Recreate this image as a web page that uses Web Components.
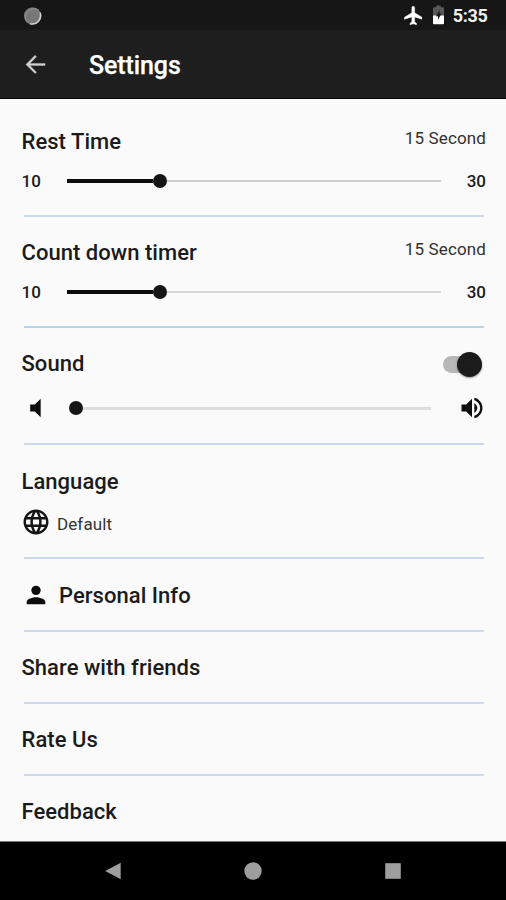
<!DOCTYPE html>
<html lang="en">
<head>
<meta charset="utf-8">
<title>Settings</title>
<style>
html,body{margin:0;height:100%;background:#fafafa}
body{font-family:Roboto,"Noto Sans",sans-serif;color:#1b1b1b;overflow:hidden}
</style>
</head>
<body>
<settings-screen></settings-screen>
<script>
const define = (name, html, setup) => customElements.define(name, class extends HTMLElement {
  connectedCallback() {
    if (this.shadowRoot) return;
    const t = document.createElement('template');
    t.innerHTML = html;
    this.attachShadow({mode: 'open'}).append(t.content.cloneNode(true));
    if (setup) setup(this);
  }
});

define('status-bar', `
<style>
:host{display:flex;align-items:center;height:30px;background:#161616;color:#f2f2f2;padding:0 18.500px 0 23px;box-sizing:border-box}
.dot{width:19px;height:19px}
.right{margin-left:auto;display:flex;align-items:center}
.plane{width:18.500px;height:19px;margin-right:9.500px}
.bat{width:13px;height:20px;margin-right:8px}
span{font-size:18px;font-weight:700;line-height:30px;padding-top:2px;letter-spacing:-.3px}
</style>
<svg class="dot" viewBox="0 0 19 19"><circle cx="9.5" cy="9.8" r="8.6" fill="#777"/><path d="M4.500 16.800A8.600 8.600 0 0 1 16 4.200" fill="none" stroke="#939393" stroke-width="1"/><path d="M17 6.500a8.400 8.400 0 0 1-10 11.200" fill="none" stroke="#cfcfcf" stroke-width="1.600"/></svg>
<div class="right">
<svg class="plane" viewBox="1.500 1.700 20 20.600"><path fill="#fff" stroke="#fff" stroke-width=".5" d="M21 16v-2l-8-5V3.500c0-.83-.67-1.500-1.500-1.500S10 2.670 10 3.500V9l-8 5v2l8-2.500V19l-2 1.500V22l3.500-1 3.500 1v-1.500L13 19v-5.500l8 2.500z"/></svg>
<svg class="bat" viewBox="0 0 13 20"><path d="M2 2.200h2.300V.5h4.400v1.700H11a1 1 0 0 1 1 1V11H1V3.200a1 1 0 0 1 1-1z" fill="#585858"/><path d="M1 10.500h11v7.800a1 1 0 0 1-1 1H2a1 1 0 0 1-1-1z" fill="#fff"/><path d="M7.500 5 4 11.300H6v3.400l3.500-6.200H7.500z" fill="#191919"/></svg>
<span>5:35</span></div>`);

define('app-bar', `
<style>
:host{display:flex;align-items:center;height:69px;box-sizing:border-box;background:#1e1e1e;border-bottom:1px solid #070707;padding:3px 0 0 22px;color:#fff}
svg{width:27px;height:27px;margin-right:40px;margin-bottom:3px}
h1{margin:0;font-size:25px;font-weight:500;line-height:30px;letter-spacing:-.1px;-webkit-text-stroke:.25px #fff}
</style>
<svg viewBox="0 0 24 24"><path fill="#d0d0d0" stroke="#d0d0d0" stroke-width=".3" d="M20.500 11.100H7l5.900-6-1.300-1.300L3.500 12l8.100 8.100 1.300-1.300L7 12.900h13.500z"/></svg>
<h1><slot></slot></h1>`);

define('settings-section', `
<style>
:host{box-sizing:border-box;height:var(--h);padding:0 20px 0 21.500px;display:flex;flex-direction:column}
header{display:flex;align-items:center;height:30px;margin-top:var(--top,21px)}
h2{margin:0;font-size:22px;font-weight:500;line-height:30px;letter-spacing:.04px}
.end{margin-left:auto}
hr{margin:auto 2px 0;border:0;height:2px;background:var(--rule,#c9daef);width:auto;flex:none}
</style>
<header><slot name="icon"></slot><h2></h2><div class="end"><slot name="end"></slot></div></header>
<slot></slot><hr>`, el => {
  el.shadowRoot.querySelector('h2').textContent = el.getAttribute('label');
  if (el.hasAttribute('last')) el.shadowRoot.querySelector('hr').remove();
});

define('value-text', `
<style>:host{display:block;font-size:17px;line-height:24px;color:#303030;margin-top:-8px;letter-spacing:.13px;font-weight:400}</style><slot></slot>`);

define('range-row', `
<style>
:host{display:grid;grid-template-columns:var(--left,45px) 1fr var(--right,45px);align-items:center;height:24px;margin-top:12px;font-size:17px;font-weight:500}
.end{display:flex;justify-content:flex-end}
.start{display:flex}
.start,.end{padding-bottom:var(--lift,1px)}
.track{display:flex;align-items:center}
.fill{height:4px;background:#0b0b0b;width:var(--value,86.500px)}
.thumb{width:14px;height:14px;border-radius:50%;background:#151515;flex:none}
.rest{height:var(--line,2px);background:var(--track,#ccc);flex:1}
</style>
<div class="start"><slot name="start"></slot></div>
<div class="track"><div class="fill"></div><div class="thumb"></div><div class="rest"></div></div>
<div class="end"><slot name="end"></slot></div>`);

define('toggle-switch', `
<style>
:host{display:flex;align-items:center;justify-content:flex-end;width:39px;height:26px;margin-right:4px}
.track{width:39px;height:17px;border-radius:9px;background:#b7b7b7;display:flex;align-items:center;justify-content:flex-end}
.thumb{width:25px;height:25px;border-radius:50%;background:#1b1b1b;box-shadow:0 1px 2px #0006;flex:none}
</style>
<div class="track"><div class="thumb"></div></div>`);

const icons = {
  mute: ['0 0 24 24', '<path d="M7 9v6h4l5 5V4l-5 5z"/>'],
  volume: ['0 0 24 24', '<path d="M3 9v6h4l5 5V4L7 9H3zm13.500 3c0-1.770-1.020-3.290-2.500-4.030v8.050c1.480-.73 2.500-2.250 2.500-4.020zM14 3.230v2.060c2.890.86 5 3.540 5 6.710s-2.110 5.850-5 6.710v2.060c4.010-.91 7-4.490 7-8.770s-2.990-7.860-7-8.770z"/>'],
  globe: ['0 0 24 24', '<path d="M11.990 2C6.470 2 2 6.480 2 12s4.470 10 9.990 10C17.520 22 22 17.520 22 12S17.520 2 11.990 2zm6.930 6h-2.950c-.32-1.250-.78-2.450-1.380-3.560 1.840.63 3.370 1.910 4.330 3.560zM12 4.040c.83 1.200 1.480 2.530 1.910 3.960h-3.820c.43-1.430 1.080-2.760 1.910-3.960zM4.260 14C4.100 13.360 4 12.690 4 12s.1-1.360.26-2h3.380c-.08.66-.14 1.320-.14 2s.06 1.340.14 2H4.260zm.82 2h2.950c.32 1.250.78 2.450 1.380 3.560-1.840-.63-3.370-1.900-4.330-3.560zm2.950-8H5.080c.96-1.660 2.490-2.930 4.330-3.560C8.810 5.550 8.350 6.750 8.030 8zM12 19.960c-.83-1.200-1.480-2.530-1.910-3.960h3.820c-.43 1.430-1.080 2.760-1.910 3.960zM14.340 14H9.660c-.09-.66-.16-1.320-.16-2s.07-1.350.16-2h4.680c.09.65.16 1.320.16 2s-.07 1.340-.16 2zm.25 5.560c.6-1.110 1.060-2.310 1.380-3.560h2.950c-.96 1.650-2.490 2.930-4.330 3.560zM16.360 14c.08-.66.14-1.320.14-2s-.06-1.340-.14-2h3.380c.16.64.26 1.310.26 2s-.1 1.360-.26 2h-3.380z"/>'],
  person: ['0 0 24 24', '<circle cx="12" cy="8" r="4"/><path d="M12 14c-2.670 0-8 1.340-8 4v2h16v-2c0-2.660-5.330-4-8-4z"/>']
};
define('ui-icon', `
<style>:host{display:block;flex:none;width:var(--w,28px);height:var(--w,28px)}svg{display:block;width:100%;height:100%;fill:var(--c,#0c0c0c)}</style><svg></svg>`, el => {
  const svg = el.shadowRoot.querySelector('svg');
  const [box, body] = icons[el.getAttribute('name')];
  svg.setAttribute('viewBox', box);
  svg.innerHTML = body;
});

define('language-row', `
<style>
:host{display:flex;align-items:center;height:30px;margin-top:10px}
ui-icon{--w:30px;margin-left:-1px;--c:#151515}
span{font-size:17px;line-height:24px;color:#333;margin:3px 0 0 6.500px;letter-spacing:.1px}
</style>
<ui-icon name="globe"></ui-icon><span><slot></slot></span>`);

define('nav-bar', `
<style>
:host{display:grid;grid-template-columns:140px 140px 140px;justify-content:center;align-items:center;justify-items:center;height:59px;background:#000;border-top:1px solid #777;box-sizing:border-box}
svg{width:18px;height:18px;fill:#9e9e9e}
</style>
<svg viewBox="0 0 18 18"><path d="M1.200 9 16.700.8v16.400z"/></svg>
<svg viewBox="0 0 18 18"><circle cx="9" cy="9" r="8.700"/></svg>
<svg viewBox="0 0 18 18"><path d="M1.200 1.200h15.600v15.600H1.200z"/></svg>`);

define('settings-screen', `
<style>
:host{display:flex;flex-direction:column;width:506px;height:900px;background:#fafafa}
main{flex:1;min-height:0;display:flex;flex-direction:column;overflow:hidden}
settings-section{flex:none}
.volume{--left:47.500px;--right:55px;--value:0px;--line:3px;--track:#dedede;--lift:0px;margin-top:15px}
.person{margin:-3px 9.500px 0 0;--w:28px}
</style>
<status-bar></status-bar>
<app-bar>Settings</app-bar>
<main>
<settings-section label="Rest Time" style="--h:118px;--top:28px"><value-text slot="end">15 Second</value-text><range-row><span slot="start">10</span><span slot="end">30</span></range-row></settings-section>
<settings-section label="Count down timer" style="--h:111px;--rule:#b7d5e8"><value-text slot="end">15 Second</value-text><range-row style="--track:#d8d8d8"><span slot="start">10</span><span slot="end">30</span></range-row></settings-section>
<settings-section label="Sound" style="--h:117px"><toggle-switch slot="end"></toggle-switch><range-row class="volume"><ui-icon name="mute" slot="start"></ui-icon><ui-icon name="volume" slot="end"></ui-icon></range-row></settings-section>
<settings-section label="Language" style="--h:114px;--top:22px"><language-row>Default</language-row></settings-section>
<settings-section label="Personal Info" style="--h:72.500px;--top:22px"><ui-icon class="person" name="person" slot="icon"></ui-icon></settings-section>
<settings-section label="Share with friends" style="--h:72px"></settings-section>
<settings-section label="Rate Us" style="--h:72px"></settings-section>
<settings-section label="Feedback" last style="--h:66px"></settings-section>
</main>
<nav-bar></nav-bar>`);
</script>
</body>
</html>
